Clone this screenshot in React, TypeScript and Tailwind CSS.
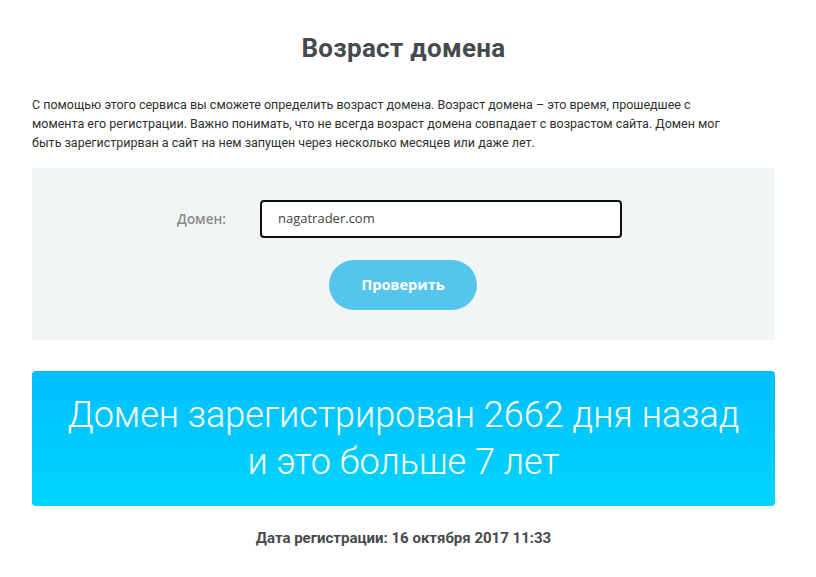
export default function App() {
  return (
    <div className="min-h-[577px] bg-white font-['Roboto','Open_Sans',sans-serif]">
      <div className="w-[743px] pt-[34px] ml-[32px]">
        <h1 className="text-center text-[26px] font-bold leading-[28px] text-[#454a4f] tracking-[0.3px]">
          Возраст домена
        </h1>
        <p className="mt-[33px] text-[12.5px] leading-[19px] text-[#2f2f2f]">
          С помощью этого сервиса вы сможете определить возраст домена. Возраст домена – это время, прошедшее с
          <br />
          момента его регистрации. Важно понимать, что не всегда возраст домена совпадает с возрастом сайта. Домен мог
          <br />
          быть зарегистрирван а сайт на нем запущен через несколько месяцев или даже лет.
        </p>

        <div className="mt-[16px] h-[172px] bg-[#f2f5f5] pt-[32px]">
          <div className="flex items-center">
            <label className="w-[194px] text-right text-[13.5px] font-semibold text-[#8a8a8a] font-['Open_Sans',sans-serif]">
              Домен:
            </label>
            <div className="ml-[34px] flex h-[38px] w-[362px] items-center rounded-[4px] border-2 border-[#111] bg-white px-[16px] text-[13px] text-[#444] font-['Open_Sans',sans-serif]">
              nagatrader.com
            </div>
          </div>
          <div className="mt-[22px] flex">
            <button className="ml-[297px] h-[50px] w-[148px] rounded-full bg-[#56c5ec] text-[14.5px] font-bold text-white font-['Open_Sans',sans-serif]">
              Проверить
            </button>
          </div>
        </div>

        <div className="mt-[31px] flex h-[135px] flex-col items-center justify-center rounded-[4px] bg-gradient-to-b from-[#00beff] to-[#00d5fe] text-white">
          <div className="text-center text-[36px] font-light leading-[47px]">
            Домен зарегистрирован 2662 дня назад
            <br />
            и это больше 7 лет
          </div>
        </div>

        <div className="mt-[21px] text-center text-[15px] font-bold text-[#454a4f]">
          Дата регистрации: 16 октября 2017 11:33
        </div>
      </div>
    </div>
  );
}
